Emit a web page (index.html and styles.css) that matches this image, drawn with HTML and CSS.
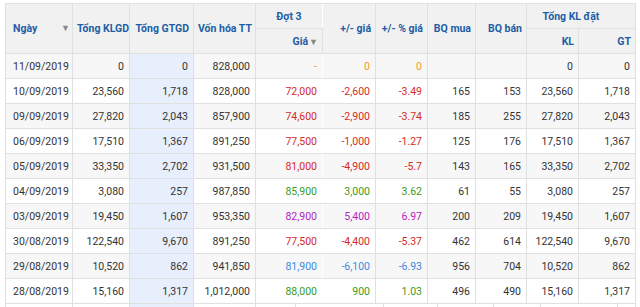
FILE: index.html
```html
<!DOCTYPE html>
<html lang="vi">
<head>
    <meta charset="UTF-8">
    <meta name="viewport" content="width=device-width, initial-scale=1.0">
    <title>Lịch sử giá</title>
    <link rel="stylesheet" href="styles.css">
</head>
<body>
    <div class="wrap">
        <table class="history">
            <colgroup>
                <col style="width:67px"><col style="width:57px"><col style="width:64px"><col style="width:62px">
                <col style="width:67px"><col style="width:53px"><col style="width:52px"><col style="width:48px">
                <col style="width:51px"><col style="width:52px"><col style="width:57px">
            </colgroup>
            <thead>
                <tr>
                    <th rowspan="2" class="left">Ngày<span class="sort">▼</span></th>
                    <th rowspan="2">Tổng KLGD</th>
                    <th rowspan="2">Tổng GTGD</th>
                    <th rowspan="2">Vốn hóa TT</th>
                    <th class="center group no-right">Đợt 3</th>
                    <th rowspan="2">+/- giá</th>
                    <th rowspan="2">+/- % giá</th>
                    <th rowspan="2">BQ mua</th>
                    <th rowspan="2">BQ bán</th>
                    <th colspan="2" class="center group-kl">Tổng KL đặt</th>
                </tr>
                <tr>
                    <th class="no-right">Giá<span class="sort inline">▼</span></th>
                    <th>KL</th>
                    <th>GT</th>
                </tr>
            </thead>
            <tbody>
                <tr>
                    <td class="left">11/09/2019</td><td>0</td><td class="hl">0</td><td>828,000</td>
                    <td class="ref no-right">-</td><td class="ref">0</td><td class="ref">0</td><td></td><td></td><td>0</td><td>0</td>
                </tr>
                <tr>
                    <td class="left">10/09/2019</td><td>23,560</td><td class="hl">1,718</td><td>828,000</td>
                    <td class="down no-right">72,000</td><td class="down">-2,600</td><td class="down">-3.49</td><td>165</td><td>153</td><td>23,560</td><td>1,718</td>
                </tr>
                <tr>
                    <td class="left">09/09/2019</td><td>27,820</td><td class="hl">2,043</td><td>857,900</td>
                    <td class="down no-right">74,600</td><td class="down">-2,900</td><td class="down">-3.74</td><td>185</td><td>255</td><td>27,820</td><td>2,043</td>
                </tr>
                <tr>
                    <td class="left">06/09/2019</td><td>17,510</td><td class="hl">1,367</td><td>891,250</td>
                    <td class="down no-right">77,500</td><td class="down">-1,000</td><td class="down">-1.27</td><td>125</td><td>176</td><td>17,510</td><td>1,367</td>
                </tr>
                <tr>
                    <td class="left">05/09/2019</td><td>33,350</td><td class="hl">2,702</td><td>931,500</td>
                    <td class="down no-right">81,000</td><td class="down">-4,900</td><td class="down">-5.7</td><td>143</td><td>165</td><td>33,350</td><td>2,702</td>
                </tr>
                <tr>
                    <td class="left">04/09/2019</td><td>3,080</td><td class="hl">257</td><td>987,850</td>
                    <td class="up no-right">85,900</td><td class="up">3,000</td><td class="up">3.62</td><td>61</td><td>55</td><td>3,080</td><td>257</td>
                </tr>
                <tr>
                    <td class="left">03/09/2019</td><td>19,450</td><td class="hl">1,607</td><td>953,350</td>
                    <td class="ceil no-right">82,900</td><td class="ceil">5,400</td><td class="ceil">6.97</td><td>200</td><td>209</td><td>19,450</td><td>1,607</td>
                </tr>
                <tr>
                    <td class="left">30/08/2019</td><td>122,540</td><td class="hl">9,670</td><td>891,250</td>
                    <td class="down no-right">77,500</td><td class="down">-4,400</td><td class="down">-5.37</td><td>462</td><td>614</td><td>122,540</td><td>9,670</td>
                </tr>
                <tr>
                    <td class="left">29/08/2019</td><td>10,520</td><td class="hl">862</td><td>941,850</td>
                    <td class="floor no-right">81,900</td><td class="floor">-6,100</td><td class="floor">-6.93</td><td>956</td><td>704</td><td>10,520</td><td>862</td>
                </tr>
                <tr>
                    <td class="left">28/08/2019</td><td>15,160</td><td class="hl">1,317</td><td>1,012,000</td>
                    <td class="up no-right">88,000</td><td class="up">900</td><td class="up">1.03</td><td>496</td><td>490</td><td>15,160</td><td>1,317</td>
                </tr>
            </tbody>
        </table>
        <div class="next-row">
            <div class="cell" style="width:67px"></div>
            <div class="cell" style="width:57px"></div>
            <div class="cell hl" style="width:64px"></div>
            <div class="cell" style="width:62px"></div>
            <div class="cell" style="width:40px"></div>
            <div class="cell" style="width:88px"></div>
            <div class="cell" style="width:54px"></div>
            <div class="cell" style="width:56px"></div>
            <div class="cell" style="width:47px"></div>
            <div class="cell" style="width:77px"></div>
            <div class="cell" style="width:18px"></div>
        </div>
    </div>
</body>
</html>
```

FILE: styles.css
```css
:root {
    --head-bg: #f1f1f1;
    --head-text: #1d5ea5;
    --line: #e0e0e0;
    --stripe: #f7f7f7;
    --hl: #e7eefc;
    --text: #333;
    --red: #d42a2a;
    --green: #3a9a22;
    --orange: #f39a2b;
    --purple: #b324c4;
    --blue: #3d8ae0;
}

body {
    margin: 0;
    background: #fff;
    font-family: Roboto, 'Noto Sans', sans-serif;
    font-size: 10.5px;
    color: var(--text);
    overflow: hidden;
}

.wrap {
    padding: 3px 5px 0 5px;
}

.history {
    border-collapse: collapse;
    table-layout: fixed;
    width: 630px;
}

.history th,
.history td {
    height: 24px;
    padding: 0 5px;
    border: 1px solid var(--line);
    text-align: right;
    white-space: nowrap;
    overflow: hidden;
}

.history th {
    background: var(--head-bg);
    color: var(--head-text);
    font-weight: 700;
    font-size: 10.5px;
    padding: 0 4px;
}

.history th.left {
    text-align: left;
    padding-left: 7px;
    padding-right: 2px;
}

.history th.center {
    text-align: center;
}

.history th.group-kl {
    padding-right: 24px;
}

.history td.left {
    text-align: left;
    padding-left: 7px;
}

.history .no-right {
    border-right-color: transparent;
}

.sort {
    float: right;
    color: #8a8a8a;
    font-size: 9px;
    font-weight: 400;
    margin-top: 1px;
}

.sort.inline {
    float: none;
    margin-left: 1px;
    margin-top: 0;
}

.history tbody tr:nth-child(odd) td {
    background: var(--stripe);
}

.history tbody td.hl,
.history tbody tr:nth-child(odd) td.hl {
    background: var(--hl);
}

.ref { color: var(--orange); }
.down { color: var(--red); }
.up { color: var(--green); }
.ceil { color: var(--purple); }
.floor { color: var(--blue); }

.next-row {
    display: flex;
    height: 20px;
    border-left: 1px solid var(--line);
    width: 630px;
}

.next-row .cell {
    flex: none;
    border-right: 1px solid var(--line);
    box-sizing: border-box;
}

.next-row .cell.hl {
    background: var(--hl);
}
```
